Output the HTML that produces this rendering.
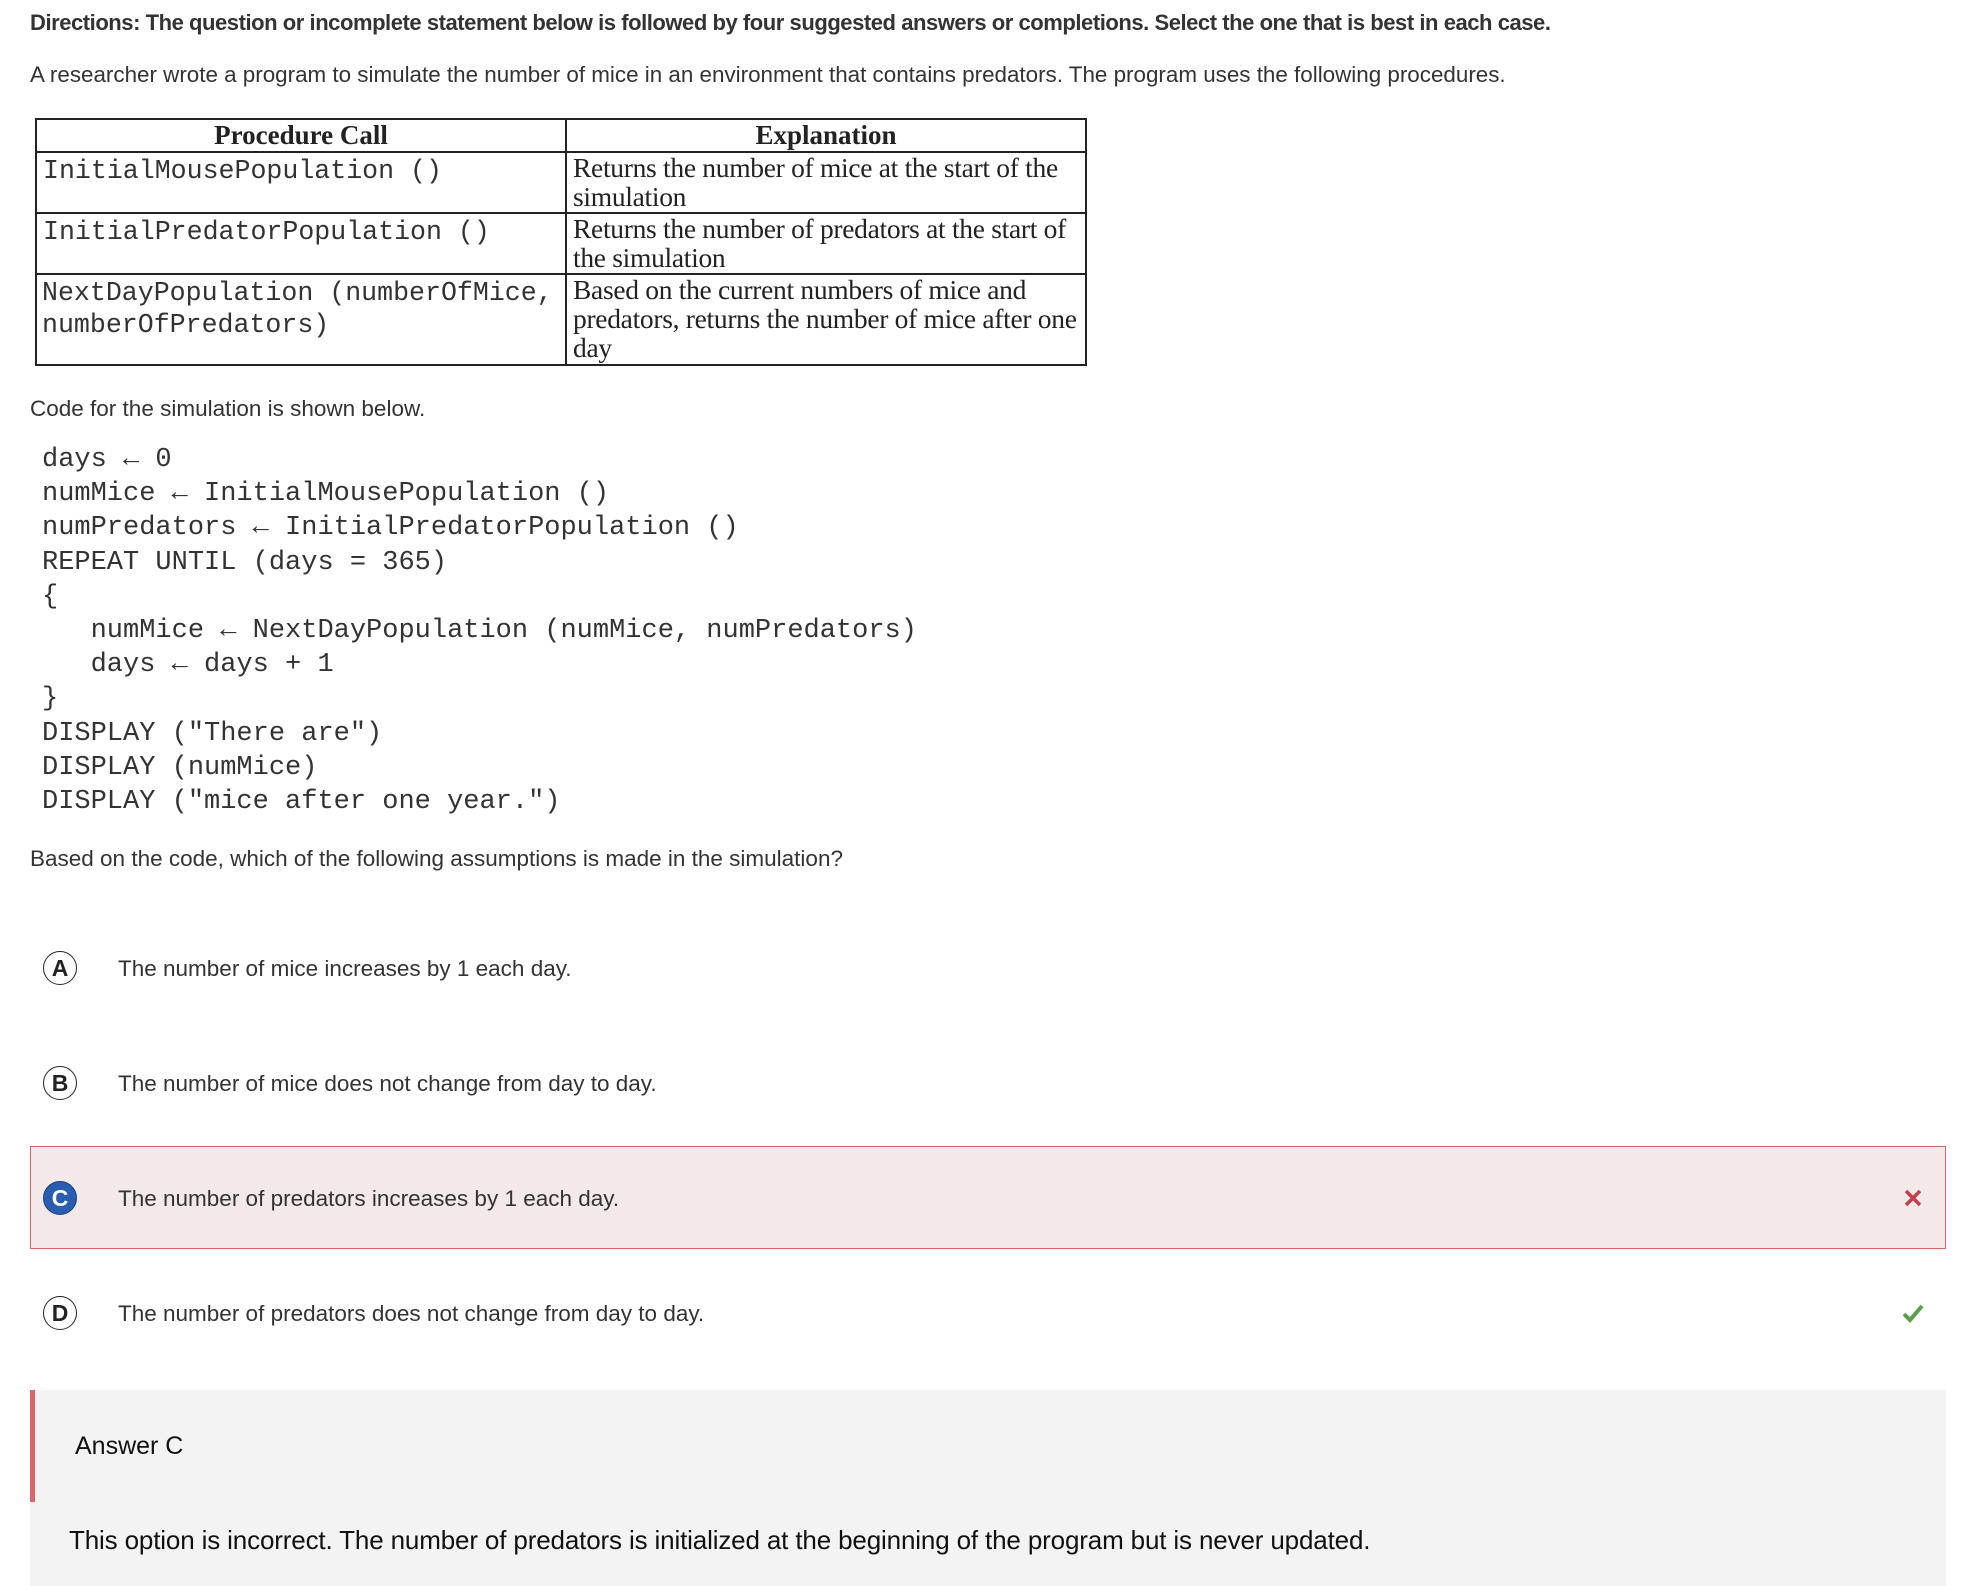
<!DOCTYPE html>
<html><head><meta charset="utf-8"><style>
body{margin:0;width:1962px;height:1586px;background:#fff;position:relative;overflow:hidden;font-family:"Liberation Sans",Arial,sans-serif;color:#222}
.a{position:absolute;white-space:nowrap}
.mono{font-family:"Liberation Mono","Courier New",monospace;color:#333}
table{position:absolute;left:35px;top:118px;border-collapse:collapse;width:1052px;table-layout:fixed}
td,th{border:2px solid #222;padding:0 6px;vertical-align:top;text-align:left;overflow:hidden}
th{font-family:"Liberation Serif",serif;font-size:27px;font-weight:bold;text-align:center;height:31px;line-height:31px;padding:0}
td.m{font-family:"Liberation Mono",monospace;font-size:26.6px;color:#333;line-height:32px;padding-top:2px;white-space:nowrap;padding-left:6px;padding-right:0}
td.s{font-family:"Liberation Serif",serif;font-size:27.5px;line-height:29px;letter-spacing:-0.3px;padding-top:0;white-space:nowrap}
.circ{position:absolute;left:43px;width:34px;height:34px;border:1.5px solid #222;border-radius:50%;text-align:center;font-weight:bold;font-size:23px;line-height:32px;box-sizing:border-box}
.opt{position:absolute;left:118px;font-size:22.5px;color:#333;line-height:30px}
</style></head><body>
<div class="a" style="left:30px;top:10px;font-size:22px;font-weight:bold;letter-spacing:-0.45px;color:#333">Directions: The question or incomplete statement below is followed by four suggested answers or completions. Select the one that is best in each case.</div>
<div class="a" style="left:30px;top:62px;font-size:22.4px;color:#333">A researcher wrote a program to simulate the number of mice in an environment that contains predators. The program uses the following procedures.</div>
<table>
<colgroup><col style="width:530px"><col></colgroup>
<tr><th>Procedure Call</th><th>Explanation</th></tr>
<tr style="height:61px"><td class="m">InitialMousePopulation ()</td><td class="s">Returns the number of mice at the start of the<br>simulation</td></tr>
<tr style="height:61px"><td class="m">InitialPredatorPopulation ()</td><td class="s">Returns the number of predators at the start of<br>the simulation</td></tr>
<tr style="height:91px"><td class="m" style="padding-left:5px">NextDayPopulation (numberOfMice,<br>numberOfPredators)</td><td class="s">Based on the current numbers of mice and<br>predators, returns the number of mice after one<br>day</td></tr>
</table>
<div class="a" style="left:30px;top:396px;font-size:22.5px;color:#333">Code for the simulation is shown below.</div>
<div class="a mono" style="left:42px;top:443px;font-size:27px;line-height:34.2px">days ← 0<br>numMice ← InitialMousePopulation ()<br>numPredators ← InitialPredatorPopulation ()<br>REPEAT UNTIL (days = 365)<br>{<br>&nbsp;&nbsp;&nbsp;numMice ← NextDayPopulation (numMice, numPredators)<br>&nbsp;&nbsp;&nbsp;days ← days + 1<br>}<br>DISPLAY ("There are")<br>DISPLAY (numMice)<br>DISPLAY ("mice after one year.")</div>
<div class="a" style="left:30px;top:846px;font-size:22.5px;color:#333">Based on the code, which of the following assumptions is made in the simulation?</div>

<div class="circ" style="top:951px">A</div><div class="opt a" style="top:954px">The number of mice increases by 1 each day.</div>
<div class="circ" style="top:1066px">B</div><div class="opt a" style="top:1069px">The number of mice does not change from day to day.</div>
<div class="a" style="left:30px;top:1146px;width:1916px;height:103px;box-sizing:border-box;border:1.5px solid #d9646c;background:#f3e9e9"></div>
<div class="circ" style="top:1181px;background:#2a5db0;border-color:#1a3f80;color:#fff">C</div><div class="opt a" style="top:1184px">The number of predators increases by 1 each day.</div>
<svg class="a" style="left:1903px;top:1188px" width="20" height="20" viewBox="0 0 20 20"><path d="M3 3L17 17M17 3L3 17" stroke="#c0404c" stroke-width="3.5"/></svg>
<div class="circ" style="top:1296px">D</div><div class="opt a" style="top:1299px">The number of predators does not change from day to day.</div>
<svg class="a" style="left:1901px;top:1302px" width="24" height="22" viewBox="0 0 24 22"><path d="M3 12L9 18L21 4" stroke="#5aa048" stroke-width="4" fill="none"/></svg>

<div class="a" style="left:30px;top:1390px;width:1916px;height:196px;background:#f3f3f3"></div>
<div class="a" style="left:30px;top:1390px;width:5px;height:112px;background:#d9646c"></div>
<div class="a" style="left:75px;top:1432px;font-size:25px;color:#111">Answer C</div>
<div class="a" style="left:69px;top:1525px;font-size:26px;color:#111;letter-spacing:-0.15px">This option is incorrect. The number of predators is initialized at the beginning of the program but is never updated.</div>
</body></html>
